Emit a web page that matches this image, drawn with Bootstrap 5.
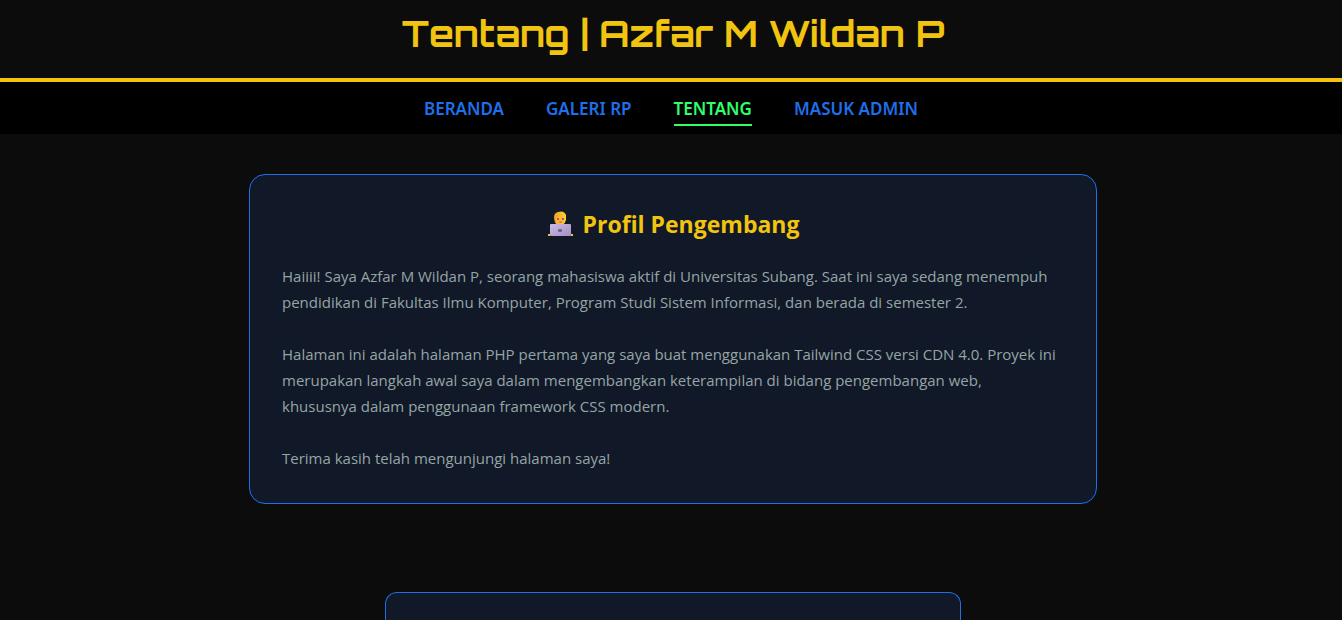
<!DOCTYPE html>
<html lang="id">
<head>
<meta charset="utf-8">
<meta name="viewport" content="width=device-width, initial-scale=1">
<title>Tentang | Azfar M Wildan P</title>
<link href="https://cdn.jsdelivr.net/npm/bootstrap@5.3.0/dist/css/bootstrap.min.css" rel="stylesheet">
<style>
  :root { --gold: #f1c40f; --blue: #1f6feb; --green: #2eff6a; --panel: #111827; }
  body { background: #0c0c0c; color: #95a5a6; font-family: "Open Sans", "Noto Sans", sans-serif; font-size: 15px; line-height: 26px; }
  .site-header { border-bottom: 4px solid var(--gold); padding: 12px 0 22px 4px; }
  .site-title { color: var(--gold); font-family: Orbitron, "DejaVu Sans", sans-serif; font-size: 36px; font-weight: 700; line-height: 44px; }
  .site-nav { background: #000; padding: 13px 0 8px; }
  .site-nav .nav { gap: 42px; }
  .site-nav .nav-link { color: var(--blue); font-family: "Noto Sans", "Open Sans", sans-serif; font-size: 17px; font-weight: 600; line-height: 28px; padding: 0 0 1px; border-bottom: 2px solid transparent; }
  .site-nav .nav-link.active { color: var(--green); border-color: var(--green); }
  .profile { background: var(--panel); border: 1px solid var(--blue); border-radius: 16px; max-width: 848px; padding: 33px 32px 32px; margin-top: 40px; }
  .profile h2 { color: var(--gold); font-size: 23px; font-weight: 800; line-height: 32px; margin-bottom: 23px; gap: 10px; }
  .profile h2 span { font-weight: 700; }
  .profile p { margin-bottom: 26px; }
  .next-panel { background: var(--panel); border: 1px solid var(--blue); border-bottom: 0; border-radius: 12px 12px 0 0; max-width: 576px; margin-top: 88px; }
</style>
</head>
<body class="d-flex flex-column min-vh-100">
  <header class="site-header text-center">
    <h1 class="site-title mb-0">Tentang | Azfar M Wildan P</h1>
  </header>
  <nav class="site-nav" aria-label="Navigasi utama">
    <ul class="nav justify-content-center">
      <li class="nav-item"><a class="nav-link" href="#beranda">BERANDA</a></li>
      <li class="nav-item"><a class="nav-link" href="#galeri">GALERI RP</a></li>
      <li class="nav-item"><a class="nav-link active" aria-current="page" href="#tentang">TENTANG</a></li>
      <li class="nav-item"><a class="nav-link" href="#masuk">MASUK ADMIN</a></li>
    </ul>
  </nav>
  <main class="d-flex flex-column align-items-center flex-grow-1 ps-1">
    <section class="profile w-100">
      <h2 class="d-flex justify-content-center align-items-center">
        <svg width="26" height="26" viewBox="0 0 26 26" aria-hidden="true">
          <defs>
            <linearGradient id="hair" x1="0" x2="1" y1="0" y2="0"><stop offset="0" stop-color="#f59a22"/><stop offset="1" stop-color="#ffd52e"/></linearGradient>
            <linearGradient id="lid" x1="0" x2="1" y1="0" y2="1"><stop offset="0" stop-color="#cdbbe4"/><stop offset="1" stop-color="#a48fc4"/></linearGradient>
          </defs>
          <path d="M7 6Q7 2 11 1Q17-1 19 4V9Q18 12 16 14H10Q7 11 7 6Z" fill="url(#hair)"/>
          <path d="M9 7L15 4L17 7V10Q16 13 13 13Q10 13 9 10Z" fill="#ffb93a"/>
          <path d="M10 7h2v2h-2zM15 7h2v2h-2z" fill="#8a6468"/>
          <path d="M12 11h3" stroke="#d3552a"/>
          <rect x="3" y="13" width="21" height="12" rx="1" fill="url(#lid)"/>
          <path d="M1 23h2v2H1zM24 23h2v2h-2z" fill="#f8c12c"/>
          <rect x="11" y="18" width="4" height="3" rx="1" fill="#74618f"/>
        </svg>
        <span>Profil Pengembang</span>
      </h2>
      <p>Haiiii! Saya Azfar M Wildan P, seorang mahasiswa aktif di Universitas Subang. Saat ini saya sedang menempuh pendidikan di Fakultas Ilmu Komputer, Program Studi Sistem Informasi, dan berada di semester 2.</p>
      <p>Halaman ini adalah halaman PHP pertama yang saya buat menggunakan Tailwind CSS versi CDN 4.0. Proyek ini merupakan langkah awal saya dalam mengembangkan keterampilan di bidang pengembangan web,<br> khususnya dalam penggunaan framework CSS modern.</p>
      <p class="mb-0">Terima kasih telah mengunjungi halaman saya!</p>
    </section>
    <section class="next-panel w-100 flex-grow-1"></section>
  </main>
<script src="https://cdn.jsdelivr.net/npm/bootstrap@5.3.0/dist/js/bootstrap.bundle.min.js"></script>
</body>
</html>
